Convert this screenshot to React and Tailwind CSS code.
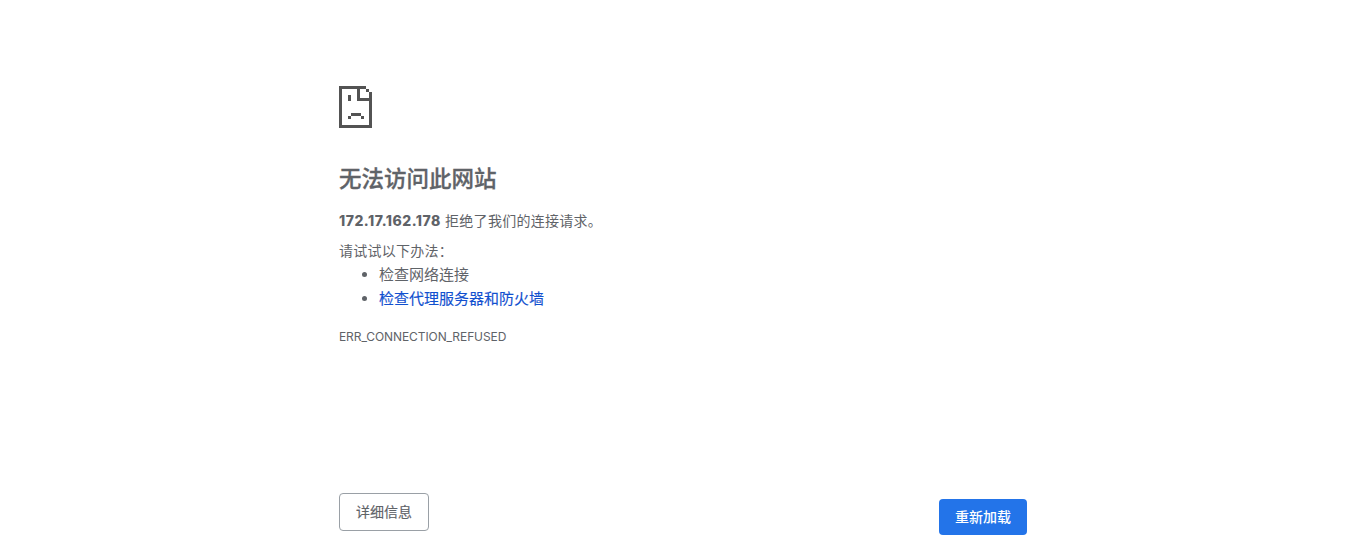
export default function App() {
  return (
    <main className="h-[557px] w-full overflow-hidden bg-white pt-[86px] font-['Inter','Noto_Sans_CJK_SC',sans-serif] text-[#5f6368]">
      <div className="mx-auto w-[688px]">
        <svg className="block" width="33" height="42" viewBox="0 0 33 42" fill="#535353" shapeRendering="crispEdges" aria-hidden="true">
          <path d="M0 0h27v3H3v36h27V15H18V3h3v9h9V6h3v36H0z" />
          <path d="M27 3h3v3h-3zM9 9h3v6H9zM12 27h10v3H12zM9 30h3v3H9zM22 30h3v3h-3z" />
        </svg>
        <h1 className="mt-[37px] text-[22.5px] leading-7 font-medium whitespace-nowrap [-webkit-text-stroke:0.3px_#5f6368]">无法访问此网站</h1>
        <p className="mt-[16px] text-[14px] leading-6 tracking-[0.28px] whitespace-nowrap"><strong className="font-extrabold tracking-[0.5px]">172.17.162.178</strong> 拒绝了我们的连接请求。</p>
        <p className="mt-[6px] text-[14px] leading-6 tracking-[0.25px]">请试试以下办法：</p>
        <ul className="list-disc pl-10 text-[15px] leading-6">
          <li>检查网络连接</li>
          <li><a href="#" className="text-[#1150cf] [-webkit-text-stroke:0.15px_#1150cf]">检查代理服务器和防火墙</a></li>
        </ul>
        <div className="mt-[14px] text-[12px] leading-6 tracking-[-0.09px]">ERR_CONNECTION_REFUSED</div>
        <div className="mt-[144px] flex items-start justify-between text-[14px] font-medium">
          <button className="h-[38px] w-[90px] rounded-[4px] border border-[#9aa0a6] pb-[2px] font-normal [-webkit-text-stroke:0.15px_#5f6368]">详细信息</button>
          <button className="mt-[6px] h-9 w-[88px] rounded-[4px] bg-[#2374e9] pb-[2px] text-white">重新加载</button>
        </div>
      </div>
    </main>
  );
}
